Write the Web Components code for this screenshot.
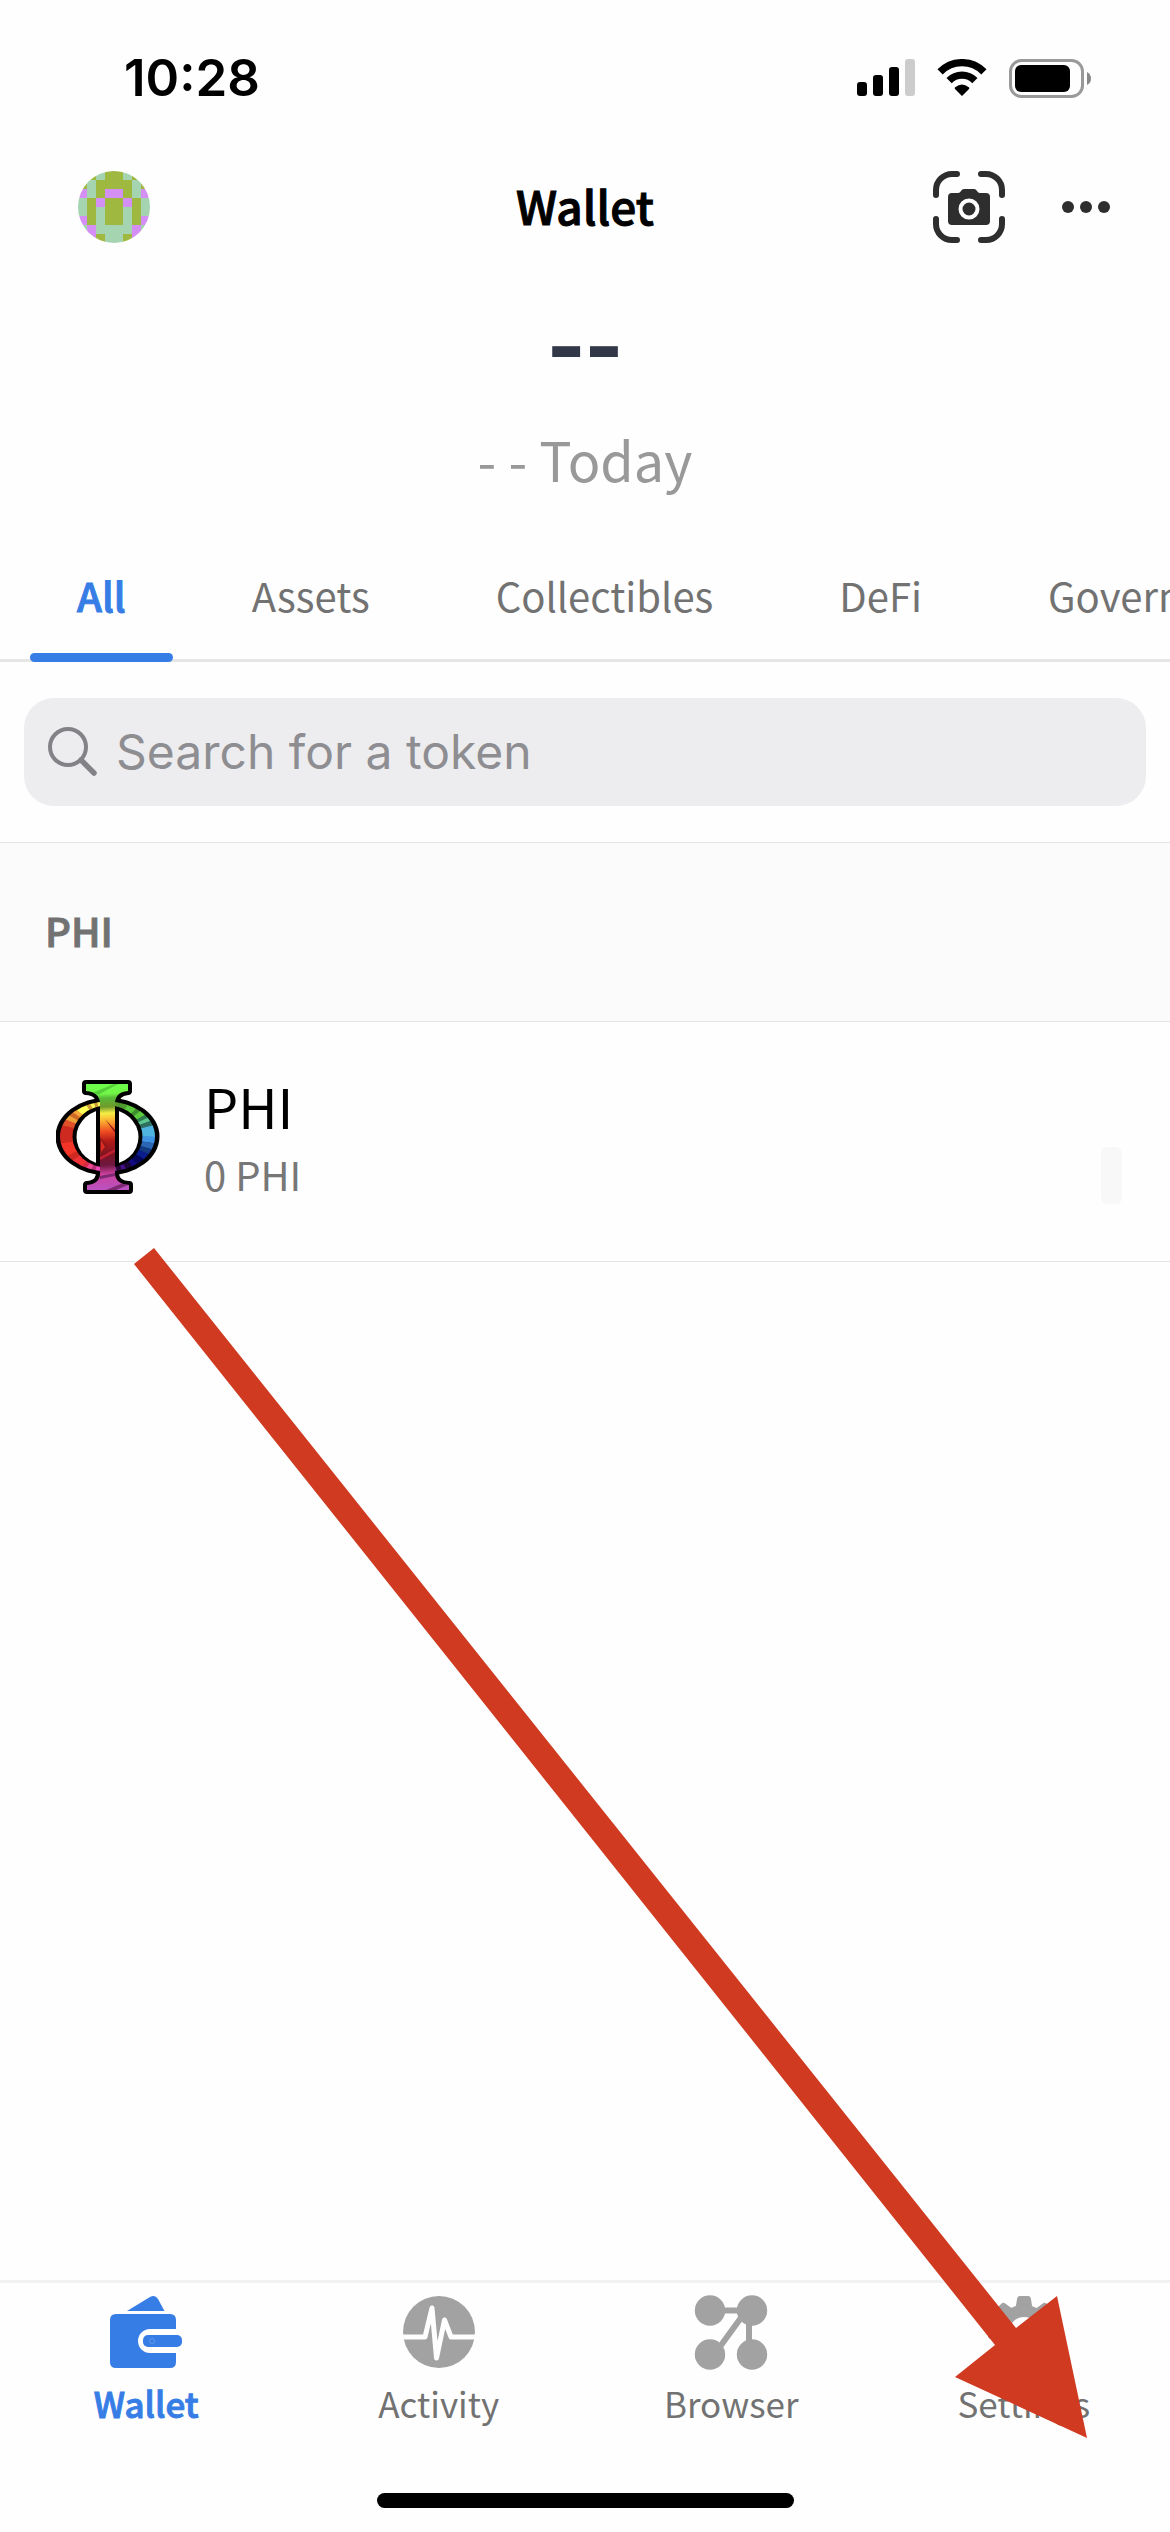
<!DOCTYPE html>
<html lang="en">
<head>
<meta charset="utf-8">
<meta name="viewport" content="width=device-width, initial-scale=1">
<title>Wallet</title>
<style>
  html, body { margin: 0; background: #fefefe; }
  body { font-family: "Noto Sans CJK SC", "Open Sans", sans-serif; color: #000; }
</style>
</head>
<body>
<wallet-app></wallet-app>

<script>
const define = (name, html, setup) => {
  const template = document.createElement('template');
  template.innerHTML = html;
  customElements.define(name, class extends HTMLElement {
    constructor() {
      super();
      this.attachShadow({ mode: 'open' }).append(template.content.cloneNode(true));
    }
    connectedCallback() { if (setup) setup(this, this.shadowRoot); }
  });
};

define('status-bar', `
<style>
  :host { display: flex; justify-content: space-between; align-items: center; padding: 48px 78px 33px 124px; }
  time { font: 600 51px/60px Inter, sans-serif; }
  .signs { display: flex; align-items: center; gap: 22px; }
  svg { display: block; }
</style>
<time>10:28</time>
<div class="signs">
  <svg width="58" height="38" viewBox="0 0 58 38" role="img" aria-label="Signal">
    <rect y="23" width="10" height="14" rx="3"/><rect x="16" y="16" width="10" height="21" rx="3"/>
    <rect x="32" y="8" width="10" height="29" rx="3"/><rect x="48" width="10" height="37" rx="3" fill="#ccc"/>
  </svg>
  <svg width="50" height="38" viewBox="0 0 50 38" role="img" aria-label="Wi-Fi">
    <g fill="none" stroke="#000" stroke-width="7.3"><path d="M3.1 12.9A30.5 30.5 0 0 1 46.9 12.9M12.1 21.6A18 18 0 0 1 37.9 21.6"/></g>
    <path d="M25 37 18 30Q17 29 18.200 28.200Q25 22.700 31.800 28.200Q33 29 32 30Z"/>
  </svg>
  <svg width="83" height="39" viewBox="0 0 83 39" role="img" aria-label="Battery">
    <rect x="1.5" y="1.500" width="72" height="36" rx="11" fill="none" stroke="#999" stroke-width="3"/>
    <rect x="6" y="6" width="55" height="27" rx="6"/><path d="M78 13Q82 15 82 19.500T78 26Z" fill="#888"/>
  </svg>
</div>`);

define('account-avatar', `
<style>
  :host { display: block; }
  button { display: block; padding: 0; border: 0; background: none; border-radius: 50%; overflow: hidden; }
  svg { display: block; }
</style>
<button aria-label="Account"><svg width="72" height="72" viewBox="0 0 8 8" shape-rendering="crispEdges"></svg></button>`,
(host, root) => {
  // One letter per cell: olive, green, pink.
  const rows = ['oogoogoo', 'ogoooogo', 'pgoppogp', 'gopoopog', 'gogoogog', 'pogoogop', 'gpggggpg', 'gpoggopg'];
  const tone = { o: '#9fb840', g: '#a5d5b0', p: '#d48ff5' };
  root.querySelector('svg').innerHTML = rows.map((row, y) =>
    [...row].map((c, x) => `<rect x="${x}" y="${y}" width="1" height="1" fill="${tone[c]}"/>`).join('')).join('');
});

define('app-header', `
<style>
  :host { display: grid; grid-template-columns: 1fr auto 1fr; align-items: center; padding: 30px 60px; }
  account-avatar { padding-left: 18px; }
  h1 { margin: 0; padding-bottom: 4px; font-size: 46px; font-weight: 500; line-height: 60px; -webkit-text-stroke: 1px currentColor; }
  .actions { display: flex; justify-content: flex-end; align-items: center; gap: 51px; }
  button { display: block; padding: 0; border: 0; background: none; color: #2e2e2e; }
  svg { display: block; }
</style>
<account-avatar></account-avatar>
<h1>Wallet</h1>
<div class="actions">
  <button aria-label="Scan"><svg width="72" height="72" viewBox="0 0 72 72">
    <path fill="none" stroke="currentColor" stroke-width="6" stroke-linecap="round" d="M3 24V19A16 16 0 0 1 19 3H24M48 3H53A16 16 0 0 1 69 19V24M69 48V53A16 16 0 0 1 53 69H48M24 69H19A16 16 0 0 1 3 53V48"/>
    <path fill="currentColor" d="M19 22H25Q27 22 28 20Q29 18 31 18H41Q43 18 44 20Q45 22 47 22H53Q57 22 57 26V50Q57 54 53 54H19Q15 54 15 50V26Q15 22 19 22Z"/>
    <circle cx="36" cy="38" r="8.500" fill="none" stroke="#fff" stroke-width="4"/>
  </svg></button>
  <button aria-label="More"><svg width="54" height="72" viewBox="0 0 54 72" fill="currentColor">
    <circle cx="12" cy="36" r="6"/><circle cx="30" cy="36" r="6"/><circle cx="48" cy="36" r="6"/>
  </svg></button>
</div>`);

define('balance-summary', `
<style>
  :host { display: block; text-align: center; }
  p { margin: 0; }
  .total { color: #333848; font-size: 102px; font-weight: 700; line-height: 128px; }
  .change { margin-top: 18px; color: #999; font-size: 54px; line-height: 80px; }
</style>
<p class="total"><slot name="total"></slot></p>
<p class="change"><slot name="change"></slot></p>`);

define('tab-item', `
<style>
  :host { display: block; flex: none; }
  button { display: block; padding: 30px 0 0; border: 0; background: none; color: #727272; font: inherit; font-size: 40px; line-height: 60px; }
  span { display: block; padding: 0 47px 28px; }
  button::after { content: ""; display: block; height: 9px; border-radius: 5px; }
  :host([selected]) button { color: #377de6; font-weight: 500; -webkit-text-stroke: 1px currentColor; }
  :host([selected]) button::after { background: #377de6; }
</style>
<button role="tab"><span><slot></slot></span></button>`,
(host, root) => root.querySelector('button').setAttribute('aria-selected', host.hasAttribute('selected')));

define('tab-strip', `
<style>
  :host { display: flex; gap: 32px; margin-top: 36px; padding: 0 30px; overflow: hidden; box-shadow: inset 0 -3px 0 #e6e6e6; }
</style>
<slot></slot>`, host => host.setAttribute('role', 'tablist'));

define('search-field', `
<style>
  :host { display: block; padding: 36px 24px; border-bottom: 1px solid #e4e4e4; }
  label { display: flex; align-items: center; gap: 18px; padding: 24px; border-radius: 30px; background: #ededef; }
  svg { display: block; flex: none; }
  input { flex: 1; min-width: 0; height: 60px; padding: 0; border: 0; outline: 0; background: none; font: 48px/60px Inter, sans-serif; color: #000; }
  input::placeholder { color: #8e8e92; opacity: 1; }
</style>
<label>
  <svg width="50" height="50" viewBox="0 0 50 50" fill="none" stroke="#838387" stroke-linecap="round">
    <circle cx="20" cy="20" r="18" stroke-width="4"/><path d="M33 33 46 46" stroke-width="5.500"/>
  </svg>
  <input type="search" aria-label="Search for a token" placeholder="Search for a token">
</label>`);

define('network-section', `
<style>
  :host { display: block; }
  h2 { margin: 0; padding: 57px 45px 61px; background: #fbfbfb; border-bottom: 1px solid #e4e4e4; color: #727272; font-size: 40px; font-weight: 500; line-height: 60px; -webkit-text-stroke: 1px currentColor; }
</style>
<h2><slot name="title"></slot></h2>
<slot></slot>`);

define('phi-logo', `
<style>:host { display: block; flex: none; } svg { display: block; }</style>
<svg width="104" height="116" viewBox="0 0 104 116" role="img" aria-label="Phi">
  <defs>
    <linearGradient id="stem" gradientUnits="userSpaceOnUse" x1="48" y1="4" x2="54" y2="112">
      <stop offset="0" stop-color="#6cff4a"/><stop offset=".1" stop-color="#72f548"/><stop offset=".14" stop-color="#58b838"/>
      <stop offset=".22" stop-color="#6f9a2c"/><stop offset=".28" stop-color="#f5ee45"/><stop offset=".35" stop-color="#fbb030"/>
      <stop offset=".45" stop-color="#ee4a22"/><stop offset=".54" stop-color="#b01a18"/><stop offset=".66" stop-color="#7d1422"/>
      <stop offset=".76" stop-color="#6e1840"/><stop offset=".84" stop-color="#cc409c"/><stop offset="1" stop-color="#b855c4"/>
    </linearGradient>
    <clipPath id="ring"><path clip-rule="evenodd" d="M4 57.500A47.500 35 0 0 1 99 57.500A47.500 35 0 0 1 4 57.500ZM16.500 57.500A35 31 0 0 0 86.500 57.500A35 31 0 0 0 16.500 57.500Z"/></clipPath>
    <clipPath id="bar"><path d="M30 5H72V12Q58 13 59 27V92Q58 105 73 106V111H31V106Q45 105 44 92V27Q45 13 30 12Z"/></clipPath>
  </defs>
  <ellipse cx="51.5" cy="57.500" rx="52" ry="39"/>
  <ellipse cx="51.5" cy="58" rx="31" ry="28" fill="#fff"/>
  <path d="M30 5H72V12Q58 13 59 27V92Q58 105 73 106V111H31V106Q45 105 44 92V27Q45 13 30 12Z" stroke="#000" stroke-width="8" stroke-linejoin="round"/>
  <g class="wheel" clip-path="url(#ring)"></g>
  <g clip-path="url(#bar)">
    <rect width="104" height="116" fill="url(#stem)"/>
    <path d="M36 14 58 5 62 5 40 17Z" fill="#54cf3a"/>
    <path d="M49 40 59 51V54ZM44 58 51 67 44 77Z" fill="#8a1a18"/>
    <path d="M45 61 49 68 45 73Z" fill="#e02a24"/>
    <path d="M44 78 59 70V73L44 81Z" fill="#c02030"/>
    <path d="M44 97 59 94V97L44 100ZM50 111 72 102V106L60 111Z" fill="#7d2a72"/>
  </g>
</svg>`,
(host, root) => {
  // Colour stops of the wheel, clockwise from the top, in degrees.
  const stops = [[0, '#5c9a2c'], [20, '#4d9a2e'], [32, '#5cc83c'], [46, '#3f8f30'], [52, '#5cc83c'], [60, '#2f7a4c'], [65, '#5cc890'], [70, '#2e6f60'], [76, '#4fb4e0'],
    [90, '#3f92e4'], [98, '#2a66b4'], [106, '#123a80'], [113, '#0b1c8c'], [122, '#06065a'], [132, '#120a80'], [140, '#1c0638'], [150, '#43108a'], [157, '#2a0638'], [165, '#8a2a98'],
    [185, '#b0307a'], [192, '#f048b8'], [200, '#b83078'], [206, '#f04890'], [214, '#d82a48'], [220, '#ee3238'], [236, '#cf2a22'], [244, '#f23526'], [262, '#cf2a20'],
    [284, '#e2502a'], [292, '#f0a038'], [299, '#d06a26'], [305, '#fba63a'], [311, '#ffff58'], [326, '#cf9a38'], [332, '#ffff58'], [338, '#cf9a38'], [343, '#ffff58'], [352, '#9aa83a'], [360]];
  const at = a => `${51.5 + 90 * Math.sin(a * Math.PI / 180)} ${57.5 - 90 * Math.cos(a * Math.PI / 180)}`;
  root.querySelector('.wheel').innerHTML = stops.slice(0, -1).map(([a, c], i) =>
    `<path d="M51.5 57.500L${at(a)}L${at(stops[i + 1][0] + .5)}Z" fill="${c}"/>`).join('');
});

define('token-row', `
<style>
  :host { display: flex; padding: 48px 48px 57px 56px; gap: 44px; align-items: center; border-bottom: 1px solid #e4e4e4; }
  .text { flex: 1; display: grid; gap: 2px; }
  .name { font-size: 54px; line-height: 72px; }
  .amount { color: #777; font-size: 40px; line-height: 60px; }
  .value { align-self: flex-end; width: 21px; height: 57px; border-radius: 6px; background: #f8f8f8; }
</style>
<slot name="logo"></slot>
<div class="text"><span class="name"><slot name="name"></slot></span><span class="amount"><slot name="amount"></slot></span></div>
<div class="value"></div>`);

define('nav-item', `
<style>
  :host { display: block; flex: 1 1 0; }
  a { display: flex; flex-direction: column; align-items: center; gap: 11px; color: #727272; text-decoration: none; font-size: 35px; line-height: 48px; }
  :host([current]) a { color: #377de6; font-weight: 500; -webkit-text-stroke: 1px currentColor; }
</style>
<a href="#"><slot name="icon"></slot><span><slot></slot></span></a>`);

define('bottom-nav', `
<style>
  :host { display: block; border-top: 3px solid #f2f2f2; padding: 13px 0 24px; }
  nav { display: flex; padding-bottom: 66px; }
  svg { display: block; overflow: visible; }
  .home { width: 417px; height: 15px; margin: 0 auto; border-radius: 8px; background: #000; }
</style>
<nav>
  <nav-item current>
    <svg slot="icon" width="72" height="72" viewBox="0 0 72 72" fill="#377de6">
      <path d="M17 15 40 1Q45-2 48 3L54.500 15Z"/>
      <path d="M6 18H60Q66 18 66 24V33H40A12 12 0 0 0 40 57H66V66Q66 72 60 72H6Q0 72 0 66V24Q0 18 6 18Z"/>
      <rect x="33" y="39" width="39" height="12" rx="5"/>
      <circle cx="42" cy="45" r="2.500" fill="none" stroke="#7aaaf0" stroke-width=".6"/>
    </svg>Wallet</nav-item>
  <nav-item>
    <svg slot="icon" width="72" height="72" viewBox="0 0 72 72">
      <circle cx="36" cy="36" r="36" fill="#a2a2a2"/>
      <path d="M0 41H22L29 12 33.500 62 41.500 24 48 41H72" fill="none" stroke="#fefefe" stroke-width="5" stroke-linecap="round" stroke-linejoin="round"/>
    </svg>Activity</nav-item>
  <nav-item>
    <svg slot="icon" width="72" height="72" viewBox="0 0 72 72" fill="#a2a2a2">
      <circle cx="15" cy="14.500" r="15.200"/><circle cx="57" cy="14.500" r="15.200"/><circle cx="15" cy="58.500" r="15.200"/><circle cx="57" cy="58.500" r="15.200"/>
      <path d="M15 14.500H57M54 15V58M48 19 24 52" stroke="#a2a2a2" stroke-width="6"/>
    </svg>Browser</nav-item>
  <nav-item>
    <svg slot="icon" width="72" height="72" viewBox="0 0 72 72">
      <circle cx="36" cy="36" r="21" fill="none" stroke="#a2a2a2" stroke-width="12"/>
      <g class="teeth" fill="#a2a2a2"></g>
    </svg>Settings</nav-item>
</nav>
<div class="home"></div>`,
(host, root) => {
  root.querySelector('.teeth').innerHTML = [0, 45, 90, 135, 180, 225, 270, 315].map(a =>
    `<path transform="rotate(${a} 36 36)" d="M27 12Q28 11 29 3Q29.500 0 32 0H40Q42.500 0 43 3Q44 11 45 12L42 16H30Z"/>`).join('');
});

// Pointer drawn across the screen, from the token to the Settings item.
define('pointer-arrow', `
<style>
  :host { display: block; position: absolute; top: 1248px; left: 134px; pointer-events: none; }
  svg { display: block; }
</style>
<svg width="953" height="1190" viewBox="0 0 953 1190"><path fill="#cf3a21" d="M20 0 882 1080 923 1048 953 1190 821 1129 861 1097 0 16Z"/></svg>`);

define('wallet-app', `
<style>
  :host { display: flex; flex-direction: column; min-height: 100vh; position: relative; overflow: hidden; background: #fefefe; }
  main { flex: 1; }
</style>
<status-bar></status-bar>
<app-header></app-header>
<main>
  <balance-summary><span slot="total">--</span><span slot="change">- - Today</span></balance-summary>
  <tab-strip>
    <tab-item selected>All</tab-item><tab-item>Assets</tab-item><tab-item>Collectibles</tab-item><tab-item>DeFi</tab-item><tab-item>Governance</tab-item>
  </tab-strip>
  <search-field></search-field>
  <network-section>
    <span slot="title">PHI</span>
    <token-row><phi-logo slot="logo"></phi-logo><span slot="name">PHI</span><span slot="amount">0 PHI</span></token-row>
  </network-section>
</main>
<bottom-nav></bottom-nav>
<pointer-arrow></pointer-arrow>`);
</script>
</body>
</html>
